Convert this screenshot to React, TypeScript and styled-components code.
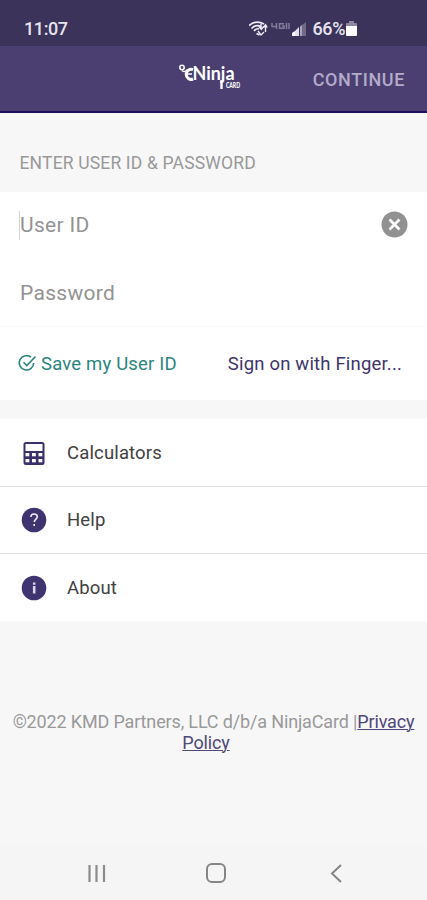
import React from 'react';
import styled, { createGlobalStyle } from 'styled-components';

const GlobalStyle = createGlobalStyle`
  * { box-sizing: border-box; }
  body { margin: 0; background: #f7f7f7; font-family: Roboto, "Liberation Sans", sans-serif; }
  button { border: 0; background: none; padding: 0; font: inherit; color: inherit; letter-spacing: inherit; }
`;

const Screen = styled.div`
  width: 427px;
  height: 900px;
  display: flex;
  flex-direction: column;
  overflow: hidden;
  background: #f7f7f7;
`;

const StatusBar = styled.div`
  height: 46px;
  padding: 10px 70px 0 24px;
  display: flex;
  align-items: flex-start;
  justify-content: space-between;
  background: #3b335a;
  color: #e6e3ef;
`;

const Clock = styled.span`
  font-size: 18px;
  font-weight: 500;
  line-height: 37px;
  letter-spacing: -0.4px;
  height: 36px;
`;

const StatusIcons = styled.div`
  display: flex;
  height: 37px;
  align-items: center;
`;

const Battery = styled.span`
  font-size: 18px;
  font-weight: 500;
  letter-spacing: -0.4px;
  margin: 0 1px 0 6px;
`;

const Header = styled.header`
  height: 67px;
  display: flex;
  align-items: center;
  justify-content: flex-end;
  padding-right: 22px;
  background: #4b3f72;
  border-bottom: 2px solid #1d0f5c;
  color: #b3abc9;
`;

const Logo = styled.svg`
  margin-right: 69px;
  overflow: visible;
`;

const Continue = styled.button`
  font-size: 18px;
  font-weight: 500;
  line-height: 24px;
  letter-spacing: 0.6px;
  margin-top: 2px;
`;

const SectionTitle = styled.h2`
  margin: 0;
  height: 79px;
  padding: 38px 19.5px 0;
  font-size: 17.5px;
  font-weight: 400;
  line-height: 24px;
  letter-spacing: 0.17px;
  color: #999;
`;

const Field = styled.div<{ $height: number }>`
  height: ${p => p.$height}px;
  padding: 0 19px;
  display: flex;
  align-items: center;
  justify-content: space-between;
  background: #fff;
`;

const Placeholder = styled.span<{ $drop: number; $caret?: boolean }>`
  border-left: 1px solid ${p => (p.$caret ? '#d4d4d4' : 'transparent')};
  margin-top: ${p => p.$drop}px;
  font-size: 21px;
  line-height: 29px;
  letter-spacing: 0.3px;
  color: #939393;
`;

const ClearButton = styled.button`
  display: flex;
  margin-bottom: 1px;
`;

const Options = styled.div`
  height: 74px;
  padding: 0 25px 0 18px;
  display: flex;
  align-items: center;
  justify-content: space-between;
  background: #fff;
  border-top: 1px solid #f9f9f9;
  font-size: 18.5px;
  letter-spacing: 0.18px;
`;

const SaveOption = styled.button`
  display: flex;
  align-items: center;
  gap: 4px;
  color: #2b857d;
`;

const Fingerprint = styled.button`
  color: #40366b;
`;

const Menu = styled.nav`
  margin-top: 19px;
  background: #fff;
`;

const MenuItem = styled.a`
  height: 67.500px;
  padding: 1px 0 0 21px;
  display: flex;
  align-items: center;
  gap: 20px;
  font-size: 18.5px;
  letter-spacing: 0.15px;
  color: #414141;
  border-bottom: 1px solid #dedede;
  &:last-child { border-bottom-color: transparent; height: 67px; }
`;

const Footer = styled.footer`
  margin-top: 90px;
  height: 132px;
  text-align: center;
  font-size: 18px;
  line-height: 21px;
  letter-spacing: -0.15px;
  color: #999;
  white-space: nowrap;
`;

const Policy = styled.a`
  color: #50477a;
  text-decoration: underline;
  text-decoration-thickness: 1px;
`;

const PolicyEnd = styled(Policy)`
  margin-right: 15px;
`;

const SystemNav = styled.div`
  height: 57px;
  padding: 3px 84px 0 86px;
  display: flex;
  align-items: center;
  background: #f5f5f5;
`;

const NavButton = styled.button<{ $gap?: number }>`
  display: flex;
  margin-left: ${p => p.$gap ?? 0}px;
`;

const WifiIcon = () => (
  <svg width="20" height="18" viewBox="1 0 20 18" fill="none" stroke="#eeecf5" strokeWidth="1.7">
    <path d="M1 5.500Q8-.5 16 4M3.500 8.500Q8 3.800 13 6.500M6 11q2.500-3 5-2M8.500 13.500l3 1.500" />
    <path d="M13 4v5M11 6.500l2.300 2.800 2.300-2.800M17.500 12V5M15.500 7.500l2-2.800 1.700 2.800M10 11l3 4 3-3" strokeWidth="1.4" />
  </svg>
);

const NetworkIcon = () => (
  <svg width="23" height="18" viewBox="-2 0 23 18" fill="none" stroke="#827b9c" strokeWidth="1.500">
    <path d="M1 3v3.500h5M5.500 3v6M13 3.700H8.500v4.600H13V6h-2M15.500 3v6M18 3v6" />
  </svg>
);

const SignalIcon = () => (
  <svg width="14" height="14" viewBox="0 0 14 14">
    <path d="M0 14v-3l3-2v5z" fill="#fff" />
    <path d="M3 14V9l4-4v9z" fill="#e4e0ed" />
    <path d="M8 14V4.500L10 3v11z" fill="#aaa4bd" />
    <path d="M10 14V3l4-3v14z" fill="#716987" />
  </svg>
);

const BatteryIcon = () => (
  <svg width="11" height="15" viewBox="0 0 11 15">
    <path d="M3 0h5v2h2q1 0 1 1v3H0V3q0-1 1-1h2z" fill="#8e88a1" />
    <path d="M0 5h11v9q0 1-1 1H1q-1 0-1-1z" fill="#fff" />
  </svg>
);

const NinjaLogo = () => (
  <Logo width="66" height="32" viewBox="0 0 66 32" fill="#fff">
    <g fill="none" stroke="#fff">
      <circle cx="4" cy="4.500" r="2.200" strokeWidth="1.500" />
      <path d="M4 7.500q3 2.500 5-1" strokeWidth="1.500" />
      <path d="M15 6.700A5 5 0 1 0 15 16" strokeWidth="3" />
      <path d="M9 11h5" strokeWidth="1.500" />
    </g>
    <text x="14.500" y="17" fontFamily="Lato, sans-serif" fontWeight="700" fontSize="18" textLength="42" lengthAdjust="spacingAndGlyphs">Ninja</text>
    <path d="M43.500 17v9" stroke="#fff" strokeWidth="2.400" />
    <text x="48" y="24.800" fontFamily="Lato, sans-serif" fontWeight="900" fontSize="7.500" textLength="14" lengthAdjust="spacingAndGlyphs">CARD</text>
  </Logo>
);

const ClearIcon = () => (
  <svg width="27" height="27" viewBox="0 0 27 27">
    <circle cx="13.500" cy="13.500" r="13" fill="#919191" />
    <path d="M8.500 8.500l10 10m0-10l-10 10" stroke="#fff" strokeWidth="2.700" />
  </svg>
);

const SavedIcon = () => (
  <svg width="19" height="18" viewBox="0 0 19 18" fill="none" stroke="#2b857d" strokeWidth="1.600">
    <path d="M13 2.200A7.200 7.200 0 1 0 15.700 8" />
    <path d="M5.500 7.300l3.300 3.300L17.500 1.500" />
  </svg>
);

const CalculatorIcon = () => (
  <svg width="26" height="26" viewBox="0 0 26 26">
    <rect x="2.500" y="2" width="21" height="23" rx="2.500" fill="#3b2f6c" />
    <rect x="4.500" y="4" width="17" height="7" fill="#fff" />
    <g fill="#fff">
      <rect x="4.500" y="13" width="3.800" height="3.300" /><rect x="11" y="13" width="3.800" height="3.300" /><rect x="17.500" y="13" width="3.800" height="3.300" />
      <rect x="4.500" y="19" width="3.800" height="3.300" /><rect x="11" y="19" width="3.800" height="3.300" /><rect x="17.500" y="19" width="3.800" height="3.300" />
    </g>
  </svg>
);

const HelpIcon = () => (
  <svg width="26" height="26" viewBox="0 0 26 26">
    <circle cx="13" cy="13" r="12.300" fill="#3f3370" />
    <path d="M9.900 10q0-3 3.200-3t3.200 2.700c0 2.300-3 2.500-3 5.300M13.200 17v2" fill="none" stroke="#eeeaf8" strokeWidth="1.600" />
  </svg>
);

const AboutIcon = () => (
  <svg width="26" height="26" viewBox="0 0 26 26">
    <circle cx="13" cy="13" r="12.300" fill="#3f3370" />
    <path d="M13.200 11v7.500M13.200 7.500v2.200" fill="none" stroke="#dcd6ec" strokeWidth="2.600" />
  </svg>
);

const menu = [
  { label: 'Calculators', Icon: CalculatorIcon },
  { label: 'Help', Icon: HelpIcon },
  { label: 'About', Icon: AboutIcon },
];

export default function App() {
  return (
    <>
      <GlobalStyle />
      <Screen>
        <StatusBar>
          <Clock>11:07</Clock>
          <StatusIcons>
            <WifiIcon />
            <NetworkIcon />
            <SignalIcon />
            <Battery>66%</Battery>
            <BatteryIcon />
          </StatusIcons>
        </StatusBar>
        <Header>
          <NinjaLogo />
          <Continue>CONTINUE</Continue>
        </Header>
        <SectionTitle>ENTER USER ID &amp; PASSWORD</SectionTitle>
        <Field $height={66}>
          <Placeholder $caret $drop={1}>User ID</Placeholder>
          <ClearButton aria-label="Clear"><ClearIcon /></ClearButton>
        </Field>
        <Field $height={68}>
          <Placeholder $drop={2}>Password</Placeholder>
        </Field>
        <Options>
          <SaveOption><SavedIcon />Save my User ID</SaveOption>
          <Fingerprint>Sign on with Finger...</Fingerprint>
        </Options>
        <Menu>
          {menu.map(({ label, Icon }) => (
            <MenuItem key={label}><Icon />{label}</MenuItem>
          ))}
        </Menu>
        <Footer>
          ©2022 KMD Partners, LLC d/b/a NinjaCard |<Policy>Privacy</Policy>
          <br />
          <PolicyEnd>Policy</PolicyEnd>
        </Footer>
        <SystemNav>
          <NavButton>
            <svg width="21" height="20" viewBox="0 0 21 20" stroke="#8c8c8c" strokeWidth="2.200">
              <path d="M3.500 2v17M10.500 2v17M18 2v17" />
            </svg>
          </NavButton>
          <NavButton $gap={98}>
            <svg width="22" height="22" viewBox="0 0 22 22" fill="none" stroke="#858585" strokeWidth="2">
              <rect x="2" y="2" width="18" height="18" rx="5" />
            </svg>
          </NavButton>
          <NavButton $gap={102}>
            <svg width="14" height="20" viewBox="0 0 14 20" fill="none" stroke="#858585" strokeWidth="2">
              <path d="M12 2L3 10.500L12 19" />
            </svg>
          </NavButton>
        </SystemNav>
      </Screen>
    </>
  );
}
